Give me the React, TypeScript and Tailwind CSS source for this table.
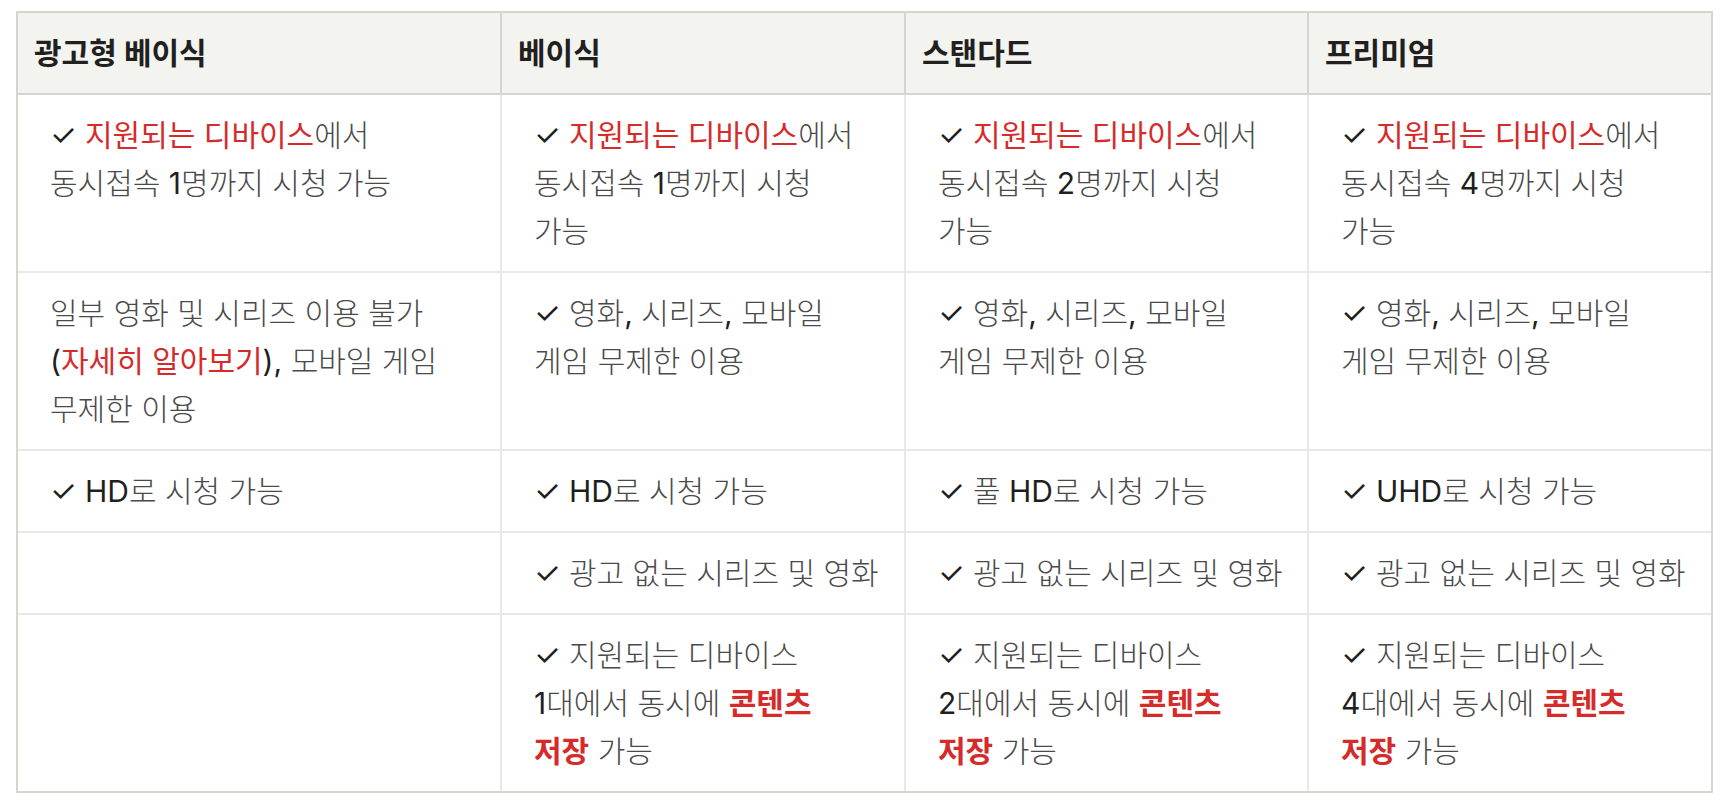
import React from 'react'

type Seg = string | { t: string; tone: 'red' | 'redBold' | 'dark' }
type Line = Seg[]

const red = (t: string): Seg => ({ t, tone: 'red' })
const redB = (t: string): Seg => ({ t, tone: 'redBold' })
const dk = (t: string): Seg => ({ t, tone: 'dark' })
const check = dk('✓ ')

const plans = ['광고형 베이식', '베이식', '스탠다드', '프리미엄']

const deviceLines = (n: string, wrap: boolean): Line[] =>
    wrap
        ? [[check, red('지원되는 디바이스'), '에서'], ['동시접속 ', dk(n), '명까지 시청'], ['가능']]
        : [[check, red('지원되는 디바이스'), '에서'], ['동시접속 ', dk(n), '명까지 시청 가능']]

const gameLines: Line[] = [[check, '영화', dk(','), ' 시리즈', dk(','), ' 모바일'], ['게임 무제한 이용']]

const saveLines = (n: string): Line[] => [
    [check, '지원되는 디바이스'],
    [dk(n), '대에서 동시에 ', redB('콘텐츠')],
    [redB('저장'), ' 가능'],
]

const noAds: Line[] = [[check, '광고 없는 시리즈 및 영화']]

const rows: Line[][][] = [
    [deviceLines('1', false), deviceLines('1', true), deviceLines('2', true), deviceLines('4', true)],
    [
        [['일부 영화 및 시리즈 이용 불가'], [dk('('), red('자세히 알아보기'), dk('),'), ' 모바일 게임'], ['무제한 이용']],
        gameLines,
        gameLines,
        gameLines,
    ],
    [
        [[check, dk('HD'), '로 시청 가능']],
        [[check, dk('HD'), '로 시청 가능']],
        [[check, '풀 ', dk('HD'), '로 시청 가능']],
        [[check, dk('UHD'), '로 시청 가능']],
    ],
    [[], noAds, noAds, noAds],
    [[], saveLines('1'), saveLines('2'), saveLines('4')],
]

const toneClass = {
    red: 'text-[#d52b2b] font-normal',
    redBold: 'text-[#d52b2b] font-bold',
    dark: 'text-[#1f1f1f] font-normal',
}

function Cell({ lines, last, bottom }: { lines: Line[]; last: boolean; bottom: boolean }) {
    return (
        <div
            className={`pl-8 pr-4 py-4 font-light text-[#4a4a4a] border-[#e8e8e4] ${last ? '' : 'border-r-2'} ${
                bottom ? '' : 'border-b-2'
            }`}
        >
            {lines.map((line, i) => (
                <div key={i} className="whitespace-nowrap leading-[48px]">
                    {line.map((seg, j) =>
                        typeof seg === 'string' ? (
                            <span key={j}>{seg}</span>
                        ) : (
                            <span key={j} className={toneClass[seg.tone]}>
                                {seg.t}
                            </span>
                        )
                    )}
                </div>
            ))}
        </div>
    )
}

export default function App() {
    return (
        <div className="min-h-screen bg-white pt-[11px] pl-4 font-['Inter','Noto_Sans_CJK_KR',sans-serif] text-[30px]">
            <div className="w-[1697px] border-2 border-[#d6d6d1] grid grid-cols-[484px_404px_403px_402px]">
                {/* header */}
                {plans.map((p, i) => (
                    <div
                        key={p}
                        className={`bg-[#f3f3ef] px-4 py-4 leading-[48px] font-bold text-[#221f1f] border-b-2 border-[#d6d6d1] ${
                            i < 3 ? 'border-r-2' : ''
                        }`}
                    >
                        {p}
                    </div>
                ))}

                {rows.map((row, r) =>
                    row.map((lines, c) => (
                        <Cell key={`${r}-${c}`} lines={lines} last={c === 3} bottom={r === rows.length - 1} />
                    ))
                )}
            </div>
        </div>
    )
}
